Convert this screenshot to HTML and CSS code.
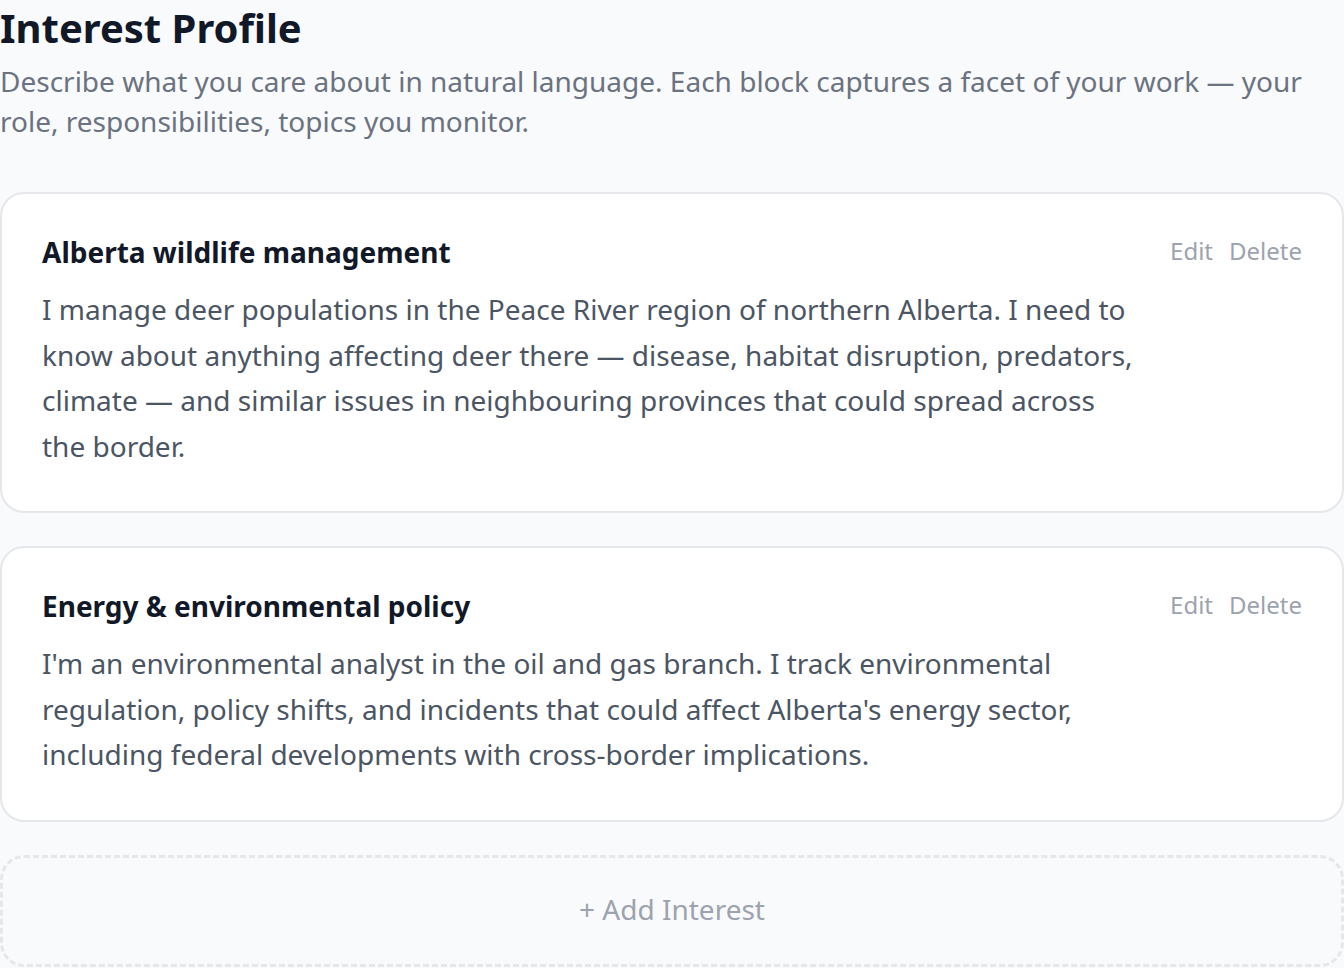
FILE: index.html
```html
<!DOCTYPE html>
<html lang="en">
<head>
    <meta charset="UTF-8">
    <meta name="viewport" content="width=device-width, initial-scale=1.0">
    <title>Interest Profile</title>

    <link rel="stylesheet" href="styles.css">
</head>

<body>
    <div id="page">
        <h1 class="pageTitle">Interest Profile</h1>
        <p class="pageIntro">Describe what you care about in natural language. Each block captures a facet of your work — your role, responsibilities, topics you monitor.</p>

        <div class="interestList">
            <div class="interestCard">
                <div class="cardText">
                    <h2 class="cardTitle">Alberta wildlife management</h2>
                    <p class="cardBody">I manage deer populations in the Peace River region of northern Alberta. I need to know about anything affecting deer there — disease, habitat disruption, predators, climate — and similar issues in neighbouring provinces that could spread across the border.</p>
                </div>
                <div class="cardActions">
                    <button class="linkBtn">Edit</button>
                    <button class="linkBtn">Delete</button>
                </div>
            </div>

            <div class="interestCard">
                <div class="cardText">
                    <h2 class="cardTitle">Energy &amp; environmental policy</h2>
                    <p class="cardBody">I'm an environmental analyst in the oil and gas branch. I track environmental regulation, policy shifts, and incidents that could affect Alberta's energy sector, including federal developments with cross-border implications.</p>
                </div>
                <div class="cardActions">
                    <button class="linkBtn">Edit</button>
                    <button class="linkBtn">Delete</button>
                </div>
            </div>

            <button class="addBtn">+ Add Interest</button>
        </div>
    </div>
</body>
</html>
```

FILE: styles.css
```css
body{
    margin: 0;
    background-color: #f9fafb;
    font-family: "Noto Sans", "Open Sans", sans-serif;
    color: #111827;
}

#page{
    width: 1344px;
}

.pageTitle{
    margin: 0;
    font-size: 40px;
    line-height: 56px;
    font-weight: 700;
    color: #111827;
}

.pageIntro{
    margin: 5px 0 0 0;
    font-size: 28px;
    line-height: 40px;
    color: #6b7280;
}

.interestList{
    display: flex;
    flex-direction: column;
    gap: 33px;
    margin-top: 51px;
}

.interestCard{
    display: flex;
    align-items: flex-start;
    gap: 24px;
    background-color: #ffffff;
    border: 2px solid #e5e7eb;
    border-radius: 24px;
    padding: 37px 40px 42px 40px;
}

.cardText{
    flex: 1;
    max-width: 1096px;
}

.cardTitle{
    margin: 0;
    font-size: 28px;
    line-height: 42px;
    font-weight: 700;
    color: #111827;
}

.cardBody{
    margin: 14px 0 0 0;
    font-size: 28px;
    line-height: 45.5px;
    color: #4b5563;
}

.cardActions{
    display: flex;
    gap: 16px;
    margin-left: auto;
    padding-top: 2px;
}

.linkBtn{
    background: none;
    border: none;
    padding: 0;
    font-family: inherit;
    font-size: 24px;
    line-height: 36px;
    color: #9ca3af;
    cursor: pointer;
}

.addBtn{
    background-color: transparent;
    border: 3px dashed #e5e7eb;
    border-radius: 24px;
    padding: 30px 0 34px 0;
    font-family: inherit;
    font-size: 28px;
    line-height: 42px;
    color: #9ca3af;
    cursor: pointer;
}
```
